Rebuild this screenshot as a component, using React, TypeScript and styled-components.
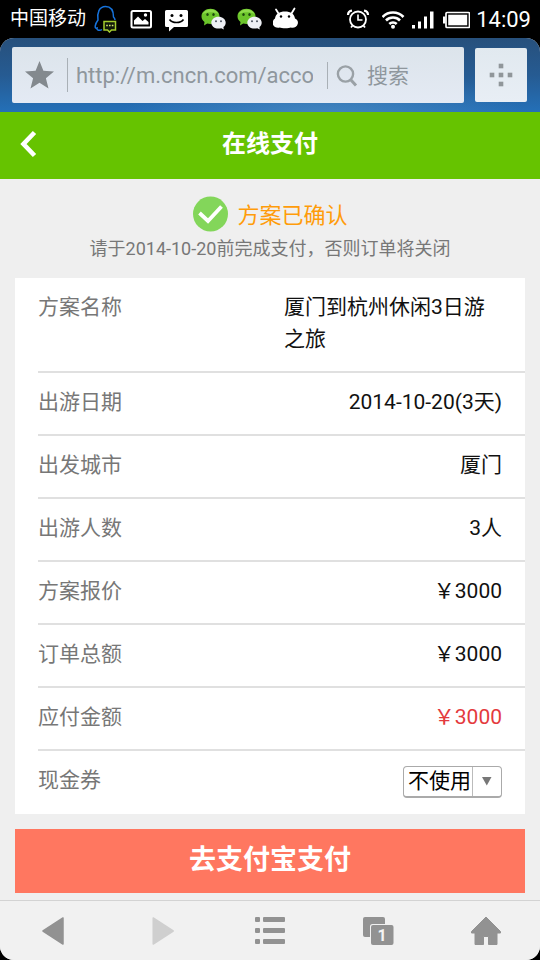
import React from "react";
import styled, { createGlobalStyle } from "styled-components";

const GlobalStyle = createGlobalStyle`
  *, *::before, *::after { box-sizing: border-box; }
  body {
    margin: 0;
    background: #000;
    font-family: Roboto, "Noto Sans CJK SC", sans-serif;
  }
  button, input, select { font-family: inherit; }
`;

const Screen = styled.div`
  display: flex;
  flex-direction: column;
  min-height: 100vh;
  background: #000;
`;

const StatusBar = styled.div`
  display: flex;
  align-items: center;
  justify-content: space-between;
  height: 38px;
  padding: 0 9px 0 10px;
  color: #fff;
`;

const StatusGroup = styled.div<{ $gap: number }>`
  display: flex;
  align-items: center;
  gap: ${(p) => p.$gap}px;
  svg { display: block; }
`;

const Carrier = styled.span`
  font-size: 19px;
  line-height: 28px;
  margin-right: -3px;
`;

const Clock = styled.time`
  padding-top: 2px;
  font-size: 22px;
  line-height: 28px;
`;

const Browser = styled.div`
  flex: 1;
  display: flex;
  flex-direction: column;
  border-radius: 14px;
  overflow: hidden;
  background: #efefef;
`;

const AddressBar = styled.div`
  display: flex;
  align-items: center;
  gap: 11px;
  height: 74px;
  padding: 0 13px 0 12px;
  background:
    radial-gradient(ellipse at 60% 110%, rgba(90, 150, 200, 0.6), transparent 45%),
    linear-gradient(#27507c 0%, #265b92 50%, #2470b8 100%);
`;

const AddressBox = styled.div`
  flex: 1;
  min-width: 0;
  display: flex;
  align-items: center;
  height: 56px;
  padding: 0 12px;
  border-radius: 2px;
  background: linear-gradient(#dce4eb, #e4eaf4);
  color: #8f979d;
`;

const PlainButton = styled.button`
  display: flex;
  align-items: center;
  justify-content: center;
  padding: 0;
  border: 0;
  background: none;
  color: inherit;
  cursor: pointer;
  svg { display: block; }
`;

const StarButton = styled(PlainButton)`
  margin-right: 12px;
`;

const Divider = styled.span<{ $height: number }>`
  width: 1px;
  height: ${(p) => p.$height}px;
  background: #a9b0b6;
`;

const UrlInput = styled.input`
  flex: 1;
  min-width: 0;
  margin: 0 14px 0 8px;
  padding: 2px 0 0;
  border: 0;
  outline: 0;
  background: none;
  color: #8f979d;
  font-size: 22px;
  line-height: 32px;
`;

const SearchButton = styled(PlainButton)`
  gap: 9px;
  margin: 0 43px 0 8px;
  padding-top: 2px;
  font-size: 21px;
  line-height: 32px;
`;

const MenuButton = styled(PlainButton)`
  width: 52px;
  height: 54px;
  border-radius: 2px;
  background: linear-gradient(#e1e9ef, #e8eef5);
`;

const TitleBar = styled.header`
  display: grid;
  grid-template-columns: 56px 1fr 56px;
  align-items: center;
  height: 67px;
  padding-bottom: 4px;
  background: #66c300;
  color: #fff;
`;

const Title = styled.h1`
  margin: 0;
  font-size: 24px;
  line-height: 36px;
  font-weight: 700;
  text-align: center;
`;

const Content = styled.main`
  flex: 1;
  display: flex;
  flex-direction: column;
  padding: 17px 15px 7px;
`;

const Notice = styled.div`
  display: flex;
  align-items: center;
  justify-content: center;
  gap: 9px;
  height: 36px;
  svg { display: block; }
`;

const NoticeTitle = styled.h2`
  margin: 0;
  padding-top: 3px;
  color: #ff9c0a;
  font-size: 22px;
  line-height: 36px;
  font-weight: 400;
`;

const Hint = styled.p`
  margin: 4px 0 16px;
  color: #777;
  font-size: 18px;
  line-height: 26px;
  text-align: center;
`;

const Card = styled.section`
  padding-left: 23px;
  background: #fff;
`;

const Row = styled.div`
  display: flex;
  justify-content: space-between;
  min-height: 63px;
  padding: 13px 23px 16px 0;
  border-bottom: 2px solid #e0e0e0;
  font-size: 21px;
  line-height: 32px;
  &:last-child { border-bottom: 0; }
`;

const Label = styled.label`
  color: #777;
`;

const Value = styled.output<{ $due?: boolean }>`
  max-width: 47%;
  color: ${(p) => (p.$due ? "#e43a3d" : "#111")};
`;

const SelectBox = styled.div`
  position: relative;
  width: 99px;
  height: 32px;
  margin-top: 2px;
`;

const Select = styled.select`
  appearance: none;
  display: block;
  width: 100%;
  height: 100%;
  padding: 0 0 2px 4px;
  border: 1px solid #aaa;
  border-bottom-width: 2px;
  border-radius: 4px;
  background: #fff;
  color: #000;
  font-size: 21px;
`;

const SelectArrow = styled.span`
  position: absolute;
  top: 1px;
  right: 1px;
  bottom: 2px;
  width: 29px;
  display: flex;
  align-items: center;
  justify-content: center;
  border-left: 1px solid #bbb;
  pointer-events: none;
`;

const PayButton = styled.button`
  height: 64px;
  margin-top: 15px;
  padding: 0 0 2px;
  border: 0;
  background: #ff7760;
  color: #fff;
  font-size: 27px;
  line-height: 36px;
  font-weight: 700;
  cursor: pointer;
`;

const NavBar = styled.nav`
  display: grid;
  grid-template-columns: repeat(5, 1fr);
  height: 60px;
  border-top: 1px solid #d3d3d3;
  background: #f1f1f1;
`;

const TabCount = styled.text`
  font-family: Roboto, sans-serif;
  font-size: 16px;
  font-weight: 700;
  fill: #f4f4f4;
`;

function StatusIcon({ width = 26, children }: { width?: number; children: React.ReactNode }) {
  return (
    <svg width={width} height="28" viewBox={`0 0 ${width} 28`} fill="none" aria-hidden="true">
      {children}
    </svg>
  );
}

function ChatIcon() {
  return (
    <StatusIcon>
      <path d="M9.5 3.8c5 0 9 3.3 9 7.5s-4 7.6-9 7.6c-1.2 0-2.3-.2-3.3-.5L3 20.5l.5-3.5C1.600 15.600.5 13.600.5 11.300c0-4.200 4-7.500 9-7.500z" fill="#6cc52b" />
      <path d="M9.500 4.500c4 0 7 2 7.800 4.500-3-2-11-2.500-15.600.2C2.800 6.400 5.800 4.500 9.500 4.500z" fill="#8fdc4c" />
      <ellipse cx="6.500" cy="9.500" rx="1.200" ry="1.500" fill="#1d4a0c" />
      <ellipse cx="12.500" cy="9.500" rx="1.200" ry="1.500" fill="#1d4a0c" />
      <path d="M17.500 11.700c4 0 7.200 2.600 7.200 6 0 1.800-.9 3.300-2.300 4.400l.4 2.300-2.500-1.200c-.9.300-1.800.4-2.800.4-4 0-7.200-2.600-7.200-5.900s3.200-6 7.200-6z" fill="#eef0f5" />
      <circle cx="15" cy="16.200" r="1" fill="#4d5563" />
      <circle cx="20" cy="16.200" r="1" fill="#4d5563" />
    </StatusIcon>
  );
}

function LeftStatusIcons() {
  return (
    <>
      <StatusIcon>
        <path d="M9 24.500c-2 1.500-5.500 1-5-1.500-3 1-2-4 1-8C4 8 6 1.500 12.500 1.500S20.500 7 20.500 12c1 1 1.500 2 1.500 3" stroke="#1673dc" strokeWidth="1.500" />
        <path d="M11 16.500h11.500v8.500h-4l-2 2-2-2H11z" fill="#10180a" stroke="#a4cc2e" strokeWidth="1.500" />
        <path d="M13.200 20.500h1.600M16 20.500h1.600M18.800 20.500h1.600" stroke="#d5ec6c" strokeWidth="1.600" />
      </StatusIcon>
      <StatusIcon>
        <rect x="2.500" y="6" width="19.500" height="16.500" rx="1.500" stroke="#fff" strokeWidth="2" />
        <path d="M5 19.500v-4l4-4 4.500 4.500 2.500-2 3.500 3v2.500z" fill="#fff" />
        <circle cx="16.500" cy="10" r="1.700" fill="#fff" />
      </StatusIcon>
      <StatusIcon>
        <path d="M1.500 5h20a1.500 1.500 0 0 1 1.500 1.500v14a1.500 1.500 0 0 1-1.500 1.500H9l-5 4.500V22H1.500A1.500 1.500 0 0 1 0 20.500v-14A1.500 1.500 0 0 1 1.500 5z" fill="#fff" />
        <circle cx="7" cy="10.500" r="1.500" fill="#000" />
        <circle cx="16" cy="10.500" r="1.500" fill="#000" />
        <path d="M4.500 14.500c3 4 11 4 14 0" stroke="#000" strokeWidth="1.700" />
      </StatusIcon>
      <ChatIcon />
      <ChatIcon />
      <StatusIcon>
        <path d="M5.500 8.500 3 4.500M18.500 8.500l3-5" stroke="#fff" strokeWidth="1.800" strokeLinecap="round" />
        <path d="M2 13.500C2.500 9 6.500 6.500 12 6.500s9.500 2.500 10 7c2.500 1 3.300 3.200 2.800 5.200-.8 3-4 4.800-7 3.800-1.500 1-9.500 1-11 0-3 1-6.200-.8-7-3.300-.5-2 .3-4.500 2.200-5.700z" fill="#fff" />
        <circle cx="8" cy="11.500" r="1.200" fill="#000" />
        <circle cx="16" cy="11.500" r="1.200" fill="#000" />
      </StatusIcon>
    </>
  );
}

function RightStatusIcons() {
  return (
    <>
      <StatusIcon width={30}>
        <circle cx="12" cy="14.500" r="8" stroke="#fff" strokeWidth="1.800" />
        <path d="M12 9.500v5.500h4.500" stroke="#fff" strokeWidth="1.600" />
        <path d="M2 10c0-2.500 1.500-4 4-4.300M22 10c0-2.500-1.500-4-4-4.300" stroke="#fff" strokeWidth="2.200" />
        <path d="m7 20-2 2.500M17 20l2 2.500" stroke="#fff" strokeWidth="1.800" />
      </StatusIcon>
      <StatusIcon width={24}>
        <g stroke="#fff" strokeWidth="2.600">
          <path d="M.5 12a14.500 14.500 0 0 1 21 0" />
          <path d="M4 15.500a9.800 9.800 0 0 1 14 0" />
          <path d="M7.300 19a5.200 5.200 0 0 1 7.400 0" />
        </g>
        <circle cx="11" cy="21.800" r="2" fill="#fff" />
      </StatusIcon>
      <StatusIcon width={24}>
        <path d="M0 20h3v3.500H0zM6 16.500h3v7H6zM12 11.500h3v12h-3zM18 6.500h3.500v17H18z" fill="#fff" />
      </StatusIcon>
      <StatusIcon width={28}>
        <path d="M1 11.500h2.500v7H1z" fill="#fff" />
        <rect x="4" y="7.500" width="23.500" height="15" rx="1" stroke="#fff" strokeWidth="1.700" />
        <rect x="6.200" y="9.700" width="19" height="10.600" fill="#fff" />
      </StatusIcon>
    </>
  );
}

const details = [
  { id: "plan", label: "方案名称", value: "厦门到杭州休闲3日游之旅" },
  { id: "date", label: "出游日期", value: "2014-10-20(3天)" },
  { id: "city", label: "出发城市", value: "厦门" },
  { id: "people", label: "出游人数", value: "3人" },
  { id: "quote", label: "方案报价", value: "￥3000" },
  { id: "total", label: "订单总额", value: "￥3000" },
  { id: "due", label: "应付金额", value: "￥3000", due: true },
];

export default function App() {
  return (
    <>
      <GlobalStyle />
      <Screen>
        <StatusBar>
          <StatusGroup $gap={10}>
            <Carrier>中国移动</Carrier>
            <LeftStatusIcons />
          </StatusGroup>
          <StatusGroup $gap={6}>
            <RightStatusIcons />
            <Clock>14:09</Clock>
          </StatusGroup>
        </StatusBar>

        <Browser>
          <AddressBar>
            <AddressBox>
              <StarButton type="button" aria-label="收藏">
                <svg width="31" height="30" viewBox="0 0 31 30">
                  <path d="m15.500 1 3.900 9.800 10.600.7-8.100 6.700 2.600 10.300-9-5.700-9 5.700 2.600-10.300L1 11.500l10.600-.7z" fill="#83898e" />
                </svg>
              </StarButton>
              <Divider $height={34} />
              <UrlInput type="text" aria-label="网址" defaultValue="http://m.cncn.com/acco" />
              <Divider $height={27} />
              <SearchButton type="button">
                <svg width="22" height="22" viewBox="0 0 22 22" fill="none" stroke="#9aa1a6">
                  <circle cx="9.500" cy="9" r="7.600" strokeWidth="2.400" />
                  <path d="m14.500 14.500 5.500 6" strokeWidth="3" />
                </svg>
                搜索
              </SearchButton>
            </AddressBox>
            <MenuButton type="button" aria-label="更多">
              <svg width="24" height="24" viewBox="0 0 24 24" fill="#90969a">
                <rect x="9.700" y=".7" width="4.600" height="4.600" />
                <rect x=".7" y="9.700" width="4.600" height="4.600" />
                <rect x="9.700" y="9.700" width="4.600" height="4.600" />
                <rect x="18.700" y="9.700" width="4.600" height="4.600" />
                <rect x="9.700" y="18.700" width="4.600" height="4.600" />
              </svg>
            </MenuButton>
          </AddressBar>

          <TitleBar>
            <PlainButton type="button" aria-label="返回">
              <svg width="18" height="28" viewBox="0 0 18 28" fill="none">
                <path d="M15.500 2.500 4.500 14l11 11.500" stroke="#fff" strokeWidth="4.600" />
              </svg>
            </PlainButton>
            <Title>在线支付</Title>
          </TitleBar>

          <Content>
            <Notice>
              <svg width="36" height="36" viewBox="0 0 36 36" fill="none" aria-hidden="true">
                <circle cx="18.500" cy="18" r="17.500" fill="#83d65a" />
                <path d="m7.500 17 8.500 8 13.500-14.500" stroke="#fff" strokeWidth="3.800" />
              </svg>
              <NoticeTitle>方案已确认</NoticeTitle>
            </Notice>
            <Hint>请于2014-10-20前完成支付，否则订单将关闭</Hint>

            <Card>
              {details.map((d) => (
                <Row key={d.id}>
                  <Label htmlFor={d.id}>{d.label}</Label>
                  <Value id={d.id} $due={d.due}>{d.value}</Value>
                </Row>
              ))}
              <Row>
                <Label htmlFor="coupon">现金券</Label>
                <SelectBox>
                  <Select id="coupon" defaultValue="none">
                    <option value="none">不使用</option>
                  </Select>
                  <SelectArrow>
                    <svg width="10" height="9" viewBox="0 0 10 9" aria-hidden="true">
                      <path d="M0 0h9.500L4.800 8.500z" fill="#777" />
                    </svg>
                  </SelectArrow>
                </SelectBox>
              </Row>
            </Card>

            <PayButton type="button">去支付宝支付</PayButton>
          </Content>

          <NavBar>
            <PlainButton type="button" aria-label="后退">
              <svg width="24" height="30" viewBox="0 0 24 30">
                <path d="M21 2v26L1 15z" fill="#929292" stroke="#929292" strokeWidth="1.500" strokeLinejoin="round" />
              </svg>
            </PlainButton>
            <PlainButton type="button" aria-label="前进">
              <svg width="24" height="30" viewBox="0 0 24 30">
                <path d="M4 2v26L24 15z" transform="translate(-.8)" fill="#cfcfcf" stroke="#cfcfcf" strokeWidth="1.500" strokeLinejoin="round" />
              </svg>
            </PlainButton>
            <PlainButton type="button" aria-label="菜单">
              <svg width="30" height="28" viewBox="0 0 30 28" fill="#929292">
                {[0, 11, 22].map((y) => (
                  <g key={y}>
                    <rect x="0" y={y} width="5" height="5" rx="1" />
                    <rect x="8" y={y} width="22" height="5" rx="1" />
                  </g>
                ))}
              </svg>
            </PlainButton>
            <PlainButton type="button" aria-label="窗口">
              <svg width="32" height="30" viewBox="0 0 32 30">
                <rect x="1" y="1" width="22" height="20" rx="2" fill="#929292" />
                <rect x="8" y="8" width="24" height="22" rx="2.500" fill="#f1f1f1" />
                <rect x="9" y="9" width="22.500" height="20" rx="2" fill="#929292" />
                <TabCount x="20" y="24.500" textAnchor="middle">1</TabCount>
              </svg>
            </PlainButton>
            <PlainButton type="button" aria-label="主页">
              <svg width="32" height="30" viewBox="0 0 32 30">
                <path d="M16 1 1.500 15.500v1.500h3.500V28.500h8.500v-8h5v8H27V17h3.500v-1.500z" fill="#929292" stroke="#929292" strokeLinejoin="round" />
              </svg>
            </PlainButton>
          </NavBar>
        </Browser>
      </Screen>
    </>
  );
}
